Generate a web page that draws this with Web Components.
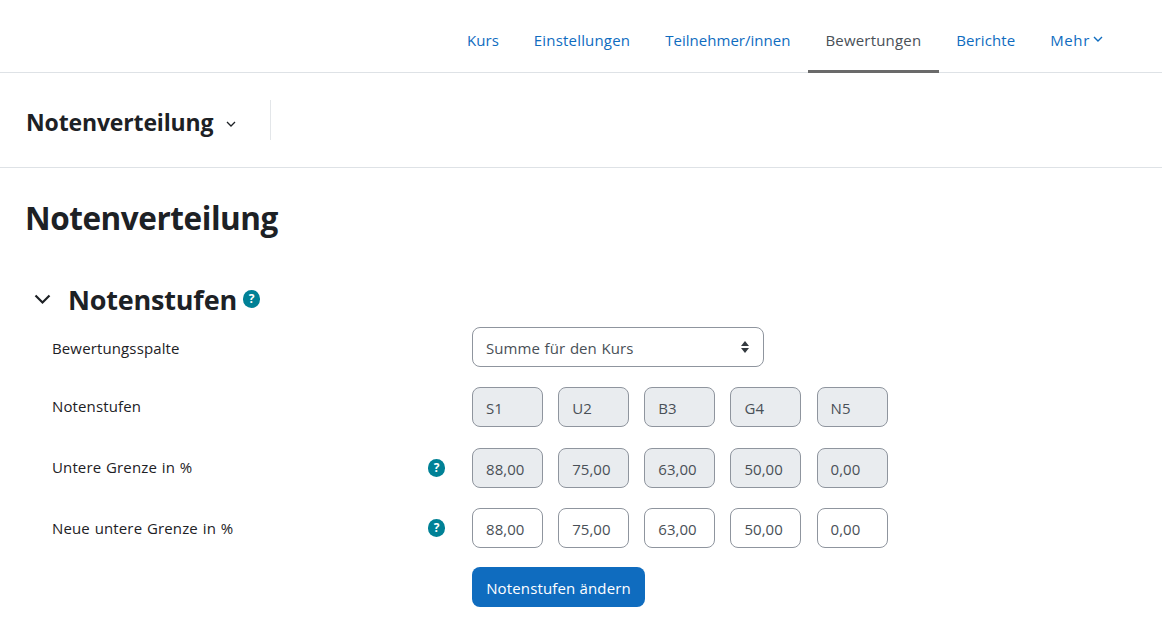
<!DOCTYPE html>
<html lang="de"><head><meta charset="utf-8"><title>Notenverteilung</title>
<style>
html,body{margin:0;padding:0;background:#fff;overflow:hidden}
body{font-family:"Open Sans","Noto Sans","Liberation Sans",sans-serif;font-size:15px;color:#1d2125}
</style></head><body>
<template id="t-nav"><style>
:host{display:flex;justify-content:flex-end;height:72px;padding-right:41.6px;border-bottom:1px solid #dee2e6;box-sizing:content-box}
</style><slot></slot></template>
<template id="t-tab"><style>
:host{display:flex;align-items:center;padding:10px 17.5px 0;color:#0f6cbf;font-size:15px;letter-spacing:.18px;white-space:nowrap;box-sizing:content-box;margin-bottom:-1px;border-bottom:3px solid transparent;height:60px}
:host([active]){color:#495057;border-bottom-color:#6a6a6a}
::slotted(svg){margin-left:3px;margin-top:-1px}
</style><slot></slot><slot name="i"></slot></template>
<template id="t-bar"><style>
:host{display:flex;align-items:center;height:94px;padding-left:26px;border-bottom:1px solid #dee2e6}
.t{font-weight:700;font-size:23px;letter-spacing:-.15px;display:flex;align-items:center;padding-top:4px}
svg{margin-left:13px;margin-top:3px}
.s{width:1px;height:40px;background:#e3e6e9;margin-left:34px}
</style><div class="t"><slot></slot><svg width="10" height="6" viewBox="0 0 10 6" fill="none" stroke="#1d2125" stroke-width="1.3"><path d="M1 1l4 4 4-4"/></svg></div><div class="s"></div></template>
<template id="t-h1"><style>
:host{display:block;padding:28px 0 0 25px;font-size:31.5px;font-weight:700;line-height:44px;letter-spacing:-.45px;height:44px}
</style><slot></slot></template>
<template id="t-sec"><style>
:host{display:flex;align-items:center;padding:41px 0 0 34px;height:36px;font-size:27px;font-weight:700;letter-spacing:-.2px}
.c{margin-right:17px;display:block}
::slotted(x-help){margin-left:6px}
</style><svg class="c" width="17" height="11" viewBox="0 0 17 11" fill="none" stroke="#1d2125" stroke-width="2.2"><path d="M1.5 1.5l7 7 7-7"/></svg><slot></slot></template>
<template id="t-help"><style>
:host{display:block;width:17.4px;height:17.4px;border-radius:50%;background:#008196;color:#fff;font:700 12px/17.4px "Open Sans",sans-serif;text-align:center}
</style>?</template>
<template id="t-row"><style>
:host{display:grid;grid-template-columns:376px 44px 1fr;align-items:center;padding-left:52px;height:40px;letter-spacing:.13px;word-spacing:.8px}
:host([up]) ::slotted([slot=label]){padding-bottom:2px}
:host([down]) ::slotted([slot=label]){padding-top:2px}
::slotted([slot=label]){display:block}
.h{display:flex}
.c{display:flex;gap:15.15px}
</style><div><slot name="label"></slot></div><div class="h"><slot name="help"></slot></div><div class="c"><slot></slot></div></template>
<template id="t-field"><style>
:host{display:flex;align-items:center;box-sizing:border-box;width:71px;height:40px;border:1px solid #8f959e;border-radius:8px;padding:2px 13px 0;color:#495057;background:#fff;font-size:15px;letter-spacing:.05px;white-space:nowrap}
:host([ro]){background:#e9ecef}
:host([sel]){width:292px;justify-content:space-between}
::slotted(svg){display:block;margin-top:-2px}
</style><slot></slot><slot name="i"></slot></template>
<template id="t-btn"><style>
:host{display:flex;align-items:center;box-sizing:border-box;width:173px;height:40px;padding-top:1px;justify-content:center;background:#0f6cbf;color:#fff;border-radius:8px;font-size:15px;letter-spacing:.15px;word-spacing:0;white-space:nowrap}
</style><slot></slot></template>
<template id="t-form"><style>
:host{display:flex;flex-direction:column;gap:20px;margin-top:10px}
</style><slot></slot></template>

<x-nav>
<x-tab style="letter-spacing:.05px">Kurs</x-tab><x-tab>Einstellungen</x-tab><x-tab style="letter-spacing:.03px">Teilnehmer/innen</x-tab><x-tab active>Bewertungen</x-tab><x-tab style="letter-spacing:.1px">Berichte</x-tab>
<x-tab style="letter-spacing:.6px">Mehr<svg slot="i" width="10" height="7" viewBox="0 0 10 7" fill="none" stroke="#0f6cbf" stroke-width="1.4"><path d="M1 1l4 4 4-4"/></svg></x-tab>
</x-nav>
<x-bar>Notenverteilung</x-bar>
<x-h1>Notenverteilung</x-h1>
<x-sec>Notenstufen<x-help></x-help></x-sec>
<x-form>
<x-row down><span slot="label">Bewertungsspalte</span><x-field sel>Summe für den Kurs<svg slot="i" width="10" height="14" viewBox="0 0 10 14" fill="#343a40"><path d="M5 1l4 5H1zM5 13l4-5H1z"/></svg></x-field></x-row>
<x-row up><span slot="label">Notenstufen</span><x-field ro>S1</x-field><x-field ro>U2</x-field><x-field ro>B3</x-field><x-field ro>G4</x-field><x-field ro>N5</x-field></x-row>
<x-row up style="margin-top:1px"><span slot="label">Untere Grenze in %</span><x-help slot="help"></x-help><x-field ro>88,00</x-field><x-field ro>75,00</x-field><x-field ro>63,00</x-field><x-field ro>50,00</x-field><x-field ro>0,00</x-field></x-row>
<x-row><span slot="label">Neue untere Grenze in %</span><x-help slot="help"></x-help><x-field>88,00</x-field><x-field>75,00</x-field><x-field>63,00</x-field><x-field>50,00</x-field><x-field>0,00</x-field></x-row>
<x-row style="margin-top:-1px"><x-btn>Notenstufen ändern</x-btn></x-row>
</x-form>
<script>
for(const [n,t] of [['x-nav','t-nav'],['x-tab','t-tab'],['x-bar','t-bar'],['x-h1','t-h1'],['x-sec','t-sec'],['x-help','t-help'],['x-row','t-row'],['x-field','t-field'],['x-btn','t-btn'],['x-form','t-form']]){
customElements.define(n,class extends HTMLElement{constructor(){super();this.attachShadow({mode:'open'}).append(document.getElementById(t).content.cloneNode(true))}});
}
</script>
</body></html>
